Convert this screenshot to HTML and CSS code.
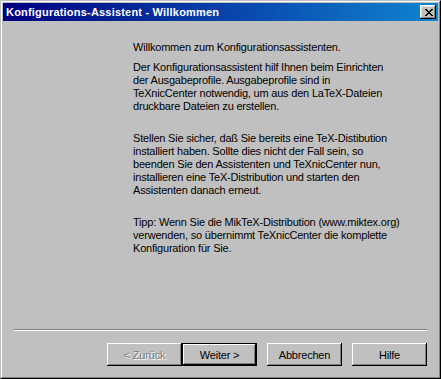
FILE: index.html
```html
<!DOCTYPE html>
<html lang="de">
<head>
    <meta charset="UTF-8">
    <title>Konfigurations-Assistent - Willkommen</title>
    <link rel="stylesheet" href="styles.css">
</head>
<body>
    <div class="window">
        <div class="frame">
            <div class="titlebar">
                <span class="title">Konfigurations-Assistent - Willkommen</span>
                <button class="close-button">
                    <svg width="8" height="7" viewBox="0 0 8 7" shape-rendering="crispEdges">
                        <path d="M0 0h2v1H0zM6 0h2v1H6zM1 1h2v1H1zM5 1h2v1H5zM2 2h4v1H2zM3 3h2v1H3zM2 4h4v1H2zM1 5h2v1H1zM5 5h2v1H5zM0 6h2v1H0zM6 6h2v1H6z" fill="#000"/>
                    </svg>
                </button>
            </div>

            <div class="client">
                <div class="wizard-text">
                    <p class="intro">Willkommen zum Konfigurationsassistenten.</p>
                    <p>Der Konfigurationsassistent hilf Ihnen beim Einrichten<br>der Ausgabeprofile. Ausgabeprofile sind in<br>TeXnicCenter notwendig, um aus den LaTeX-Dateien<br>druckbare Dateien zu erstellen.</p>
                    <p>Stellen Sie sicher, daß Sie bereits eine TeX-Distibution<br>installiert haben. Sollte dies nicht der Fall sein, so<br>beenden Sie den Assistenten und TeXnicCenter nun,<br>installieren eine TeX-Distribution und starten den<br>Assistenten danach erneut.</p>
                    <p>Tipp: Wenn Sie die MikTeX-Distribution (www.miktex.org)<br>verwenden, so übernimmt TeXnicCenter die komplette<br>Konfiguration für Sie.</p>
                </div>

                <div class="separator"></div>

                <div class="button-row">
                    <div class="nav-buttons">
                        <button class="btn" disabled>&lt; Zurück</button>
                        <button class="btn default">Weiter &gt;</button>
                    </div>
                    <button class="btn">Abbrechen</button>
                    <button class="btn">Hilfe</button>
                </div>
            </div>
        </div>
    </div>
</body>
</html>
```

FILE: styles.css
```css
body {
    margin: 0;
    padding: 0;
    background-color: #c0c0c0;
    font-family: "Liberation Sans", Arial, sans-serif;
    font-size: 11px;
    color: #000;
}

.window {
    width: 441px;
    height: 379px;
    box-sizing: border-box;
    border-top: 1px solid #c0c0c0;
    border-left: 1px solid #c0c0c0;
    border-right: 1px solid #000;
    border-bottom: 1px solid #000;
}

.frame {
    height: 100%;
    box-sizing: border-box;
    padding: 1px;
    border-top: 1px solid #fff;
    border-left: 1px solid #fff;
    border-right: 1px solid #808080;
    border-bottom: 1px solid #808080;
    display: flex;
    flex-direction: column;
}

.titlebar {
    height: 18px;
    display: flex;
    align-items: center;
    justify-content: space-between;
    background: linear-gradient(to right, #000080, #1084d0);
}

.title {
    color: #fff;
    font-weight: bold;
    font-size: 11px;
    letter-spacing: 0.2px;
    margin-left: 3px;
    white-space: nowrap;
}

.close-button {
    width: 16px;
    height: 14px;
    margin-right: 2px;
    padding: 0 0 0 1px;
    border: none;
    background: #c0c0c0;
    box-shadow: inset -1px -1px #000, inset 1px 1px #fff, inset -2px -2px #808080, inset 2px 2px #dfdfdf;
    display: flex;
    align-items: center;
    justify-content: center;
}

.client {
    flex: 1;
    display: flex;
    flex-direction: column;
    padding: 20px 11px 10px;
}

.wizard-text {
    flex: 1;
    padding-left: 119px;
    line-height: 13px;
    letter-spacing: -0.2px;
    white-space: nowrap;
}

.wizard-text p {
    margin: 0 0 19px;
}

.wizard-text .intro {
    margin-bottom: 7px;
}

.separator {
    height: 0;
    border-top: 1px solid #808080;
    border-bottom: 1px solid #fff;
}

.button-row {
    display: flex;
    justify-content: flex-end;
    gap: 10px;
    margin-top: 12px;
}

.nav-buttons {
    display: flex;
}

.btn {
    width: 75px;
    height: 23px;
    padding: 0;
    border: none;
    background: #c0c0c0;
    font-family: "Liberation Sans", Arial, sans-serif;
    font-size: 11px;
    letter-spacing: -0.2px;
    color: #000;
    box-shadow: inset -1px -1px #000, inset 1px 1px #fff, inset -2px -2px #808080, inset 2px 2px #c0c0c0;
}

.btn.default {
    box-shadow: inset 0 0 0 1px #000, inset -2px -2px #000, inset 2px 2px #fff, inset -3px -3px #808080;
}

.btn:disabled {
    color: #808080;
    text-shadow: 1px 1px #fff;
}
```
